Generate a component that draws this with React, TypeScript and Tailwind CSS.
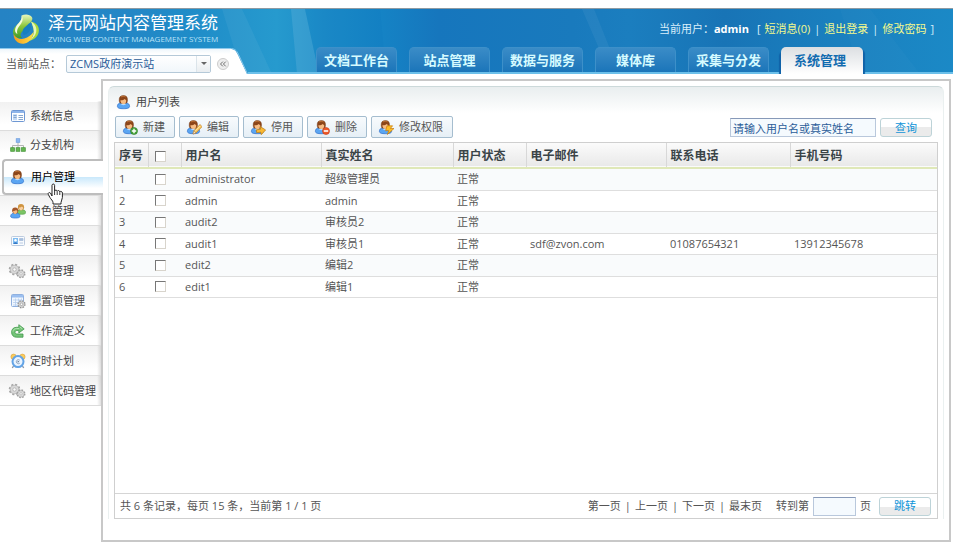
import React from "react";
import { ChevronsLeft } from "lucide-react";

type Badge = "add" | "edit" | "stop" | "delete" | "power";

function UserIcon({ badge }: { badge?: Badge }) {
  return (
    <svg viewBox="0 0 16 16" className="size-4 shrink-0" aria-hidden="true">
      <path d="M1.400 12.400C1.400 9.800 3.200 8.600 7.400 8.600s6.200 1.200 6.200 3.800c0 1.700-2.500 2.300-6.200 2.300s-6-.6-6-2.300z" fill="#5aa5f2" stroke="#2f6fca" strokeWidth=".7" />
      <path d="M4.500 9.600c1 2.300 4.800 2.300 5.900 0z" fill="#b5dbff" />
      <path d="M3.200 6C3 3 4.600 1.600 7.400 1.600S11.700 3 11.500 6c0 1.600-.5 2.700-1.100 3.200H4.300C3.600 8.700 3.200 7.600 3.200 6z" fill="#8c4519" stroke="#6d3411" strokeWidth=".4" />
      <path d="M5 2.900c1.400-.8 3.300-.8 4.600 0" fill="none" stroke="#c77b3d" strokeWidth=".9" />
      <path d="M4.400 6.300c2 .1 3.500-.5 4.400-1.400l1.500 1.500c0 2.300-1.300 3.700-2.900 3.700s-3-1.500-3-3.800z" fill="#f7bc83" />
      {badge === "add" && (
        <g>
          <circle cx="12" cy="12" r="3.500" fill="#45a338" stroke="#2b7a25" strokeWidth=".6" />
          <path d="M12 9.800v4.400M9.800 12h4.400" stroke="#fff" strokeWidth="1.400" />
        </g>
      )}
      {badge === "delete" && (
        <g>
          <circle cx="12" cy="12" r="3.500" fill="#ee5a2a" stroke="#c53a17" strokeWidth=".6" />
          <path d="M9.800 12h4.400" stroke="#fff" strokeWidth="1.600" />
        </g>
      )}
      {badge === "edit" && (
        <g>
          <path d="M7 15l.8-3.200L14 5.500l2 2.200L9.900 14z" fill="#fbc75b" stroke="#c07a1c" strokeWidth=".7" />
          <path d="M7 15l.8-3.200L9.900 14z" fill="#f6e6cc" stroke="#8f6a3a" strokeWidth=".4" />
          <path d="M9.500 11.800l4.900-5" stroke="#fff1c4" strokeWidth=".8" />
        </g>
      )}
      {badge === "stop" && (
        <path d="M6.500 10.200h4.200V7.400l5 4.200-5 4.100v-2.600H6.500z" transform="rotate(-8 11 12)" fill="#f9b934" stroke="#bd7a12" strokeWidth=".7" />
      )}
      {badge === "power" && (
        <path d="M9 6.800h5.600L12.400 9.500H16l-6.600 6 1.400-3.900H7.600z" fill="#fdbb25" stroke="#c77d0b" strokeWidth=".7" />
      )}
    </svg>
  );
}

function RolesIcon() {
  return (
    <svg viewBox="0 0 16 16" className="size-4 shrink-0" aria-hidden="true">
      <path d="M7 9.600c0-2 1.600-3 4.300-3s4.400 1 4.400 3c0 1.400-1.900 1.700-4.400 1.700S7 11 7 9.600z" fill="#7cc566" stroke="#4b9a41" strokeWidth=".6" />
      <circle cx="11" cy="4.200" r="3.100" fill="#cf9440" />
      <path d="M8.900 4.600c1 .1 2.300-.3 2.900-1l1.300 1c0 1.600-.9 2.800-2.100 2.800S8.900 6.200 8.900 4.600z" fill="#f8d0a2" />
      <path d="M.6 13.200c0-2.100 1.900-3.200 4.700-3.200s4.700 1.100 4.700 3.200c0 1.500-2 1.900-4.700 1.900S.6 14.700.6 13.200z" fill="#5aa5f2" stroke="#2f6fca" strokeWidth=".6" />
      <circle cx="5.200" cy="7.600" r="3.100" fill="#a5582a" />
      <path d="M3.100 8c1 .1 2.300-.3 2.900-1l1.300 1c0 1.600-.9 2.900-2.100 2.900S3.100 9.600 3.100 8z" fill="#f7bc83" />
    </svg>
  );
}

function InfoIcon() {
  return (
    <svg viewBox="0 0 16 16" className="size-4 shrink-0" aria-hidden="true">
      <rect x="1.500" y="2.500" width="13" height="11" rx="1" fill="#fff" stroke="#6e97d3" />
      <rect x="2" y="3" width="12" height="2" fill="#8fb5ea" />
      <rect x="3" y="6.200" width="4" height="6" fill="#c3d9f5" />
      <path d="M3.500 7.500h3M3.500 9.500h3M8.500 7.500h4.500M8.500 9.500h4.500M8.500 11.500h4.500" stroke="#86a6cf" />
    </svg>
  );
}

function OrgIcon() {
  return (
    <svg viewBox="0 0 16 16" className="size-4 shrink-0" aria-hidden="true">
      <path d="M8 5v3M2.500 11V8.500h11V11M8 8v3" fill="none" stroke="#b5b5b5" />
      <rect x="6.200" y="1.700" width="3.600" height="3.600" fill="#8db8f0" stroke="#6b9cdd" strokeWidth=".7" />
      <rect x=".7" y="10.700" width="3.800" height="3.600" fill="#65b650" stroke="#429338" strokeWidth=".7" />
      <rect x="6.100" y="10.700" width="3.800" height="3.600" fill="#65b650" stroke="#429338" strokeWidth=".7" />
      <rect x="11.500" y="10.700" width="3.800" height="3.600" fill="#65b650" stroke="#429338" strokeWidth=".7" />
    </svg>
  );
}

function MenuIcon() {
  return (
    <svg viewBox="0 0 16 16" className="size-4 shrink-0" aria-hidden="true">
      <rect x="1.500" y="3.500" width="13" height="9" rx="1" fill="#f8fbfe" stroke="#bccbdf" />
      <rect x="3" y="5" width="5" height="6" fill="#7fbdf2" />
      <circle cx="5.500" cy="7.200" r="1.200" fill="#fff" />
      <path d="M3.500 11c0-2.400 4-2.400 4 0z" fill="#3478c6" />
      <path d="M9.500 5.500h3.500v2h-3.500zM9.500 10h3.500" fill="#a8bfdc" stroke="#a8bfdc" strokeWidth=".8" />
    </svg>
  );
}

function GearsIcon() {
  return (
    <svg viewBox="0 0 18 16" className="h-4 w-[18px] shrink-0" aria-hidden="true">
      <circle cx="6.500" cy="6.500" r="4.800" fill="#d2d2d2" stroke="#a6a6a6" strokeWidth="2" strokeDasharray="2 1.770" />
      <circle cx="6.500" cy="6.500" r="4.200" fill="#d9d9d9" stroke="#b0b0b0" strokeWidth=".5" />
      <circle cx="6.500" cy="6.500" r="1.700" fill="#fafafa" stroke="#a6a6a6" strokeWidth=".7" />
      <circle cx="13" cy="10.800" r="3.600" fill="#d2d2d2" stroke="#a0a0a0" strokeWidth="1.800" strokeDasharray="1.600 1.230" />
      <circle cx="13" cy="10.800" r="3.100" fill="#dedede" stroke="#aaa" strokeWidth=".5" />
      <circle cx="13" cy="10.800" r="1.200" fill="#fff" stroke="#a0a0a0" strokeWidth=".6" />
    </svg>
  );
}

function ConfigIcon() {
  return (
    <svg viewBox="0 0 16 16" className="size-4 shrink-0" aria-hidden="true">
      <rect x="1.500" y="1.500" width="12" height="12" rx="1" fill="#f1f7fe" stroke="#8fb0df" />
      <rect x="2" y="2" width="11" height="2.500" fill="#9bbff0" />
      <path d="M3 7h9M3 9.500h9M3 12h9M5.500 5.500V13M8.500 5.500V13M11.500 5.500V13" stroke="#b5cdee" strokeWidth=".8" />
      <circle cx="11.500" cy="11.300" r="3.300" fill="#c9c9c9" stroke="#929292" strokeWidth="1.600" strokeDasharray="1.500 1.090" />
      <circle cx="11.500" cy="11.300" r="2.800" fill="#cfcfcf" />
      <circle cx="11.500" cy="11.300" r="1.200" fill="#fff" stroke="#929292" strokeWidth=".6" />
    </svg>
  );
}

function FlowIcon() {
  return (
    <svg viewBox="0 0 16 16" className="size-4 shrink-0" aria-hidden="true">
      <path
        d="M13 14.200H6.600C3.300 14.200 1.600 12 1.600 9.200c0-2.900 1.800-4.900 5-4.900h2.200V1.700l5.400 4.200L8.800 10V7.500H7c-1.300 0-2 .7-2 1.800 0 1.100.7 1.700 2 1.700h6z"
        fill="#74c478"
        stroke="#41984c"
        strokeWidth=".8"
        strokeLinejoin="round"
      />
      <path d="M9.800 3.900l2.500 2M3 8.600C3.200 6.700 4.500 5.500 6.700 5.500h2.500" fill="none" stroke="#b5e5b3" strokeWidth=".9" />
    </svg>
  );
}

function ClockIcon() {
  return (
    <svg viewBox="0 0 16 16" className="size-4 shrink-0" aria-hidden="true">
      <path d="M3.500 13l-1.200 2M12.500 13l1.200 2" stroke="#8b97a8" strokeWidth="1.400" />
      <circle cx="3.600" cy="3.800" r="2.700" fill="#fbcb5c" stroke="#d9a23c" strokeWidth=".6" />
      <circle cx="12.400" cy="3.800" r="2.700" fill="#fbcb5c" stroke="#d9a23c" strokeWidth=".6" />
      <circle cx="8" cy="8.600" r="5.500" fill="#eaf4ff" stroke="#62a3e6" strokeWidth="2" />
      <path d="M9.800 7.200C8.500 6 6.300 6.900 6.300 8.700s2.200 2.700 3.500 1.500" fill="none" stroke="#7d97b5" strokeWidth=".8" />
      <path d="M7.600 7.600l1.800 1.100-1.800 1z" fill="#54708f" />
    </svg>
  );
}

function Logo() {
  return (
    <svg viewBox="0 0 30 32" className="h-8 w-[30px] shrink-0" aria-hidden="true">
      <defs>
        <linearGradient id="logoGreen" x1="0" y1="0" x2="0" y2="1">
          <stop offset="0" stopColor="#e9f7c0" />
          <stop offset=".5" stopColor="#8cc63a" />
          <stop offset="1" stopColor="#3f9b2d" />
        </linearGradient>
        <linearGradient id="logoGold" x1="0" y1="0" x2="1" y2="0">
          <stop offset="0" stopColor="#f59c1a" />
          <stop offset="1" stopColor="#ffe04a" />
        </linearGradient>
      </defs>
      <path d="M10.500 2.500C14 .8 19 1 21 4.200c1 1.700-.2 3.600-1.700 5.200l-8.700 9.800c-1.500 1.800-1.500 4 .4 5.600C6 26 1.800 23 2 18.800c.2-3.400 2.400-5 4.800-7.700C9 8.600 11.300 6.300 10.500 2.500z" fill="url(#logoGreen)" />
      <path d="M10.500 2.500c2.200 3.200 1 6.400-1.200 9.200-2 2.600-4 5.300-2.900 9.300C3 19.500 3.500 15 6.800 11.100 9 8.600 11.300 6.300 10.500 2.500z" fill="#f4fbe0" />
      <path d="M20 8.500c6 1.500 8.800 5.800 7.700 10.800-1 4.700-5 7.700-9.700 8.700 3.700-3.200 5-6.200 4.800-9.800-.2-3.700-1.500-6.500-2.800-9.700z" fill="#a9d83c" />
      <path d="M20 8.500c4.500 2.700 6.300 6.800 5 11.300-.8 2.900-3.200 6-7 8.200 3.700-3.200 5-6.200 4.800-9.800-.2-3.700-1.500-6.500-2.800-9.700z" fill="#e8f6b8" />
      <path d="M2.500 21c2.300 4.300 6.500 5.600 10.800 4.600 4-1 6.700-3.300 9.300-6.800-.5 5.800-3.600 10.600-9.100 11.800C7.700 31.700 2.700 27.600 2.500 21z" fill="url(#logoGold)" />
      <path d="M13 15l5.500-5c1.800 2.500 1.600 6.300-.6 9-1.300 1.500-3 2.600-5.200 3-1.600-2-1.500-4.800.3-7z" fill="#167fc0" />
    </svg>
  );
}

function HandCursor() {
  return (
    <svg viewBox="0 0 17 22" className="pointer-events-none absolute top-[22px] left-[43px] z-20 h-[22px] w-[17px]" aria-hidden="true">
      <path
        d="M5 13V2.300C5 .6 7.600.6 7.600 2.300V8c.3-1.300 2.500-1.200 2.600.3.500-1.200 2.500-1 2.600.6.600-1 2.600-.6 2.600 1.200v4.400c0 2-1.400 3.200-1.400 5V21H6v-1.500c0-1.700-2.200-3.300-3.200-5.200L1.300 11.400c-.7-1.500 1.200-2.500 2.200-1.200z"
        fill="#fff"
        stroke="#222"
        strokeWidth="1"
        strokeLinejoin="round"
      />
      <path d="M7.600 8v4M10.200 8.500V12M12.800 9.200V12" stroke="#222" strokeWidth=".9" />
    </svg>
  );
}

const tabs = ["文档工作台", "站点管理", "数据与服务", "媒体库", "采集与分发", "系统管理"];

const menu = [
  { label: "系统信息", icon: <InfoIcon /> },
  { label: "分支机构", icon: <OrgIcon /> },
  { label: "用户管理", icon: <UserIcon />, active: true },
  { label: "角色管理", icon: <RolesIcon /> },
  { label: "菜单管理", icon: <MenuIcon /> },
  { label: "代码管理", icon: <GearsIcon /> },
  { label: "配置项管理", icon: <ConfigIcon /> },
  { label: "工作流定义", icon: <FlowIcon /> },
  { label: "定时计划", icon: <ClockIcon /> },
  { label: "地区代码管理", icon: <GearsIcon /> },
];

const actions: { label: string; badge: Badge }[] = [
  { label: "新建", badge: "add" },
  { label: "编辑", badge: "edit" },
  { label: "停用", badge: "stop" },
  { label: "删除", badge: "delete" },
  { label: "修改权限", badge: "power" },
];

const users = [
  { name: "administrator", real: "超级管理员", status: "正常", email: "", phone: "", mobile: "" },
  { name: "admin", real: "admin", status: "正常", email: "", phone: "", mobile: "" },
  { name: "audit2", real: "审核员2", status: "正常", email: "", phone: "", mobile: "" },
  { name: "audit1", real: "审核员1", status: "正常", email: "sdf@zvon.com", phone: "01087654321", mobile: "13912345678" },
  { name: "edit2", real: "编辑2", status: "正常", email: "", phone: "", mobile: "" },
  { name: "edit1", real: "编辑1", status: "正常", email: "", phone: "", mobile: "" },
];

const checkboxClass =
  "block size-[11px] appearance-none border border-t-[#777] border-l-[#777] border-r-[#d8d4cc] border-b-[#d8d4cc] bg-white checked:bg-[#4c97ea]";

const smallButtonClass =
  "h-[19px] w-[52px] rounded-[3px] border border-[#bdd3d8] bg-linear-to-b from-white from-50% to-[#ebebeb] to-50% text-[#0f94d8]";

function Header() {
  return (
    <header className="relative mr-[2px] flex h-[66px] overflow-hidden border-t border-[#8d9aa3] bg-[linear-gradient(90deg,#2583c4_0%,#2387c6_14%,#1f8cc8_20%,#269ace_29%,#1c8cc8_34%,#1583c5_40%,#1676bd_46%,#197abd_60%,#1b7ebf_66%,#1874b6_76%,#1a80bf_88%,#1b89c6_100%)]">
      {/* light streaks */}
      <svg viewBox="0 0 953 65" preserveAspectRatio="none" className="absolute inset-0 size-full" aria-hidden="true">
        <path d="M222 0h20l30 65h-30z" fill="#fff" opacity=".05" />
        <path d="M291 0h14l14 65h-22z" fill="#fff" opacity=".1" />
        <path d="M305 0h75l6 65h-67z" fill="#0a6db8" opacity=".1" />
        <path d="M582 0h12l26 65h-10z" fill="#fff" opacity=".05" />
        <path d="M840 0h30l50 65h-60z" fill="#fff" opacity=".02" />
      </svg>

      {/* Logo and site picker */}
      <div className="relative flex w-[248px] shrink-0 flex-col">
        <div className="flex h-[39px] items-center gap-[7px] pl-[11px]">
          <Logo />
          <div className="whitespace-nowrap text-white">
            <h1 className="text-[17px] leading-5">泽元网站内容管理系统</h1>
            <p className="text-[8px] leading-3 text-[#b9e2f8]">ZVING WEB CONTENT MANAGEMENT SYSTEM</p>
          </div>
        </div>
        <div className="flex flex-1">
          <div className="flex flex-1 items-center border-t border-[#8cc8ec] bg-linear-to-b from-[#eef6fb] to-white to-20% pt-1 pl-[6px] text-[#555]">
            <label htmlFor="site" className="w-[60px] shrink-0">当前站点：</label>
            <div className="relative">
              <select
                id="site"
                className="block h-[18px] w-[145px] appearance-none rounded-[2px] border border-[#b5c9d8] bg-linear-to-b from-white to-[#f1f7fb] pl-[3px] leading-4 text-[#2a5c99]"
              >
                <option>ZCMS政府演示站</option>
              </select>
              <span className="pointer-events-none absolute inset-y-px right-px flex w-[14px] items-center justify-center border-l border-[#dbe4ea] bg-linear-to-b from-white to-[#e9edf0]">
                <svg viewBox="0 0 6 3" className="h-[3px] w-[6px]" aria-hidden="true">
                  <path d="M0 0h6L3 3z" fill="#666" />
                </svg>
              </span>
            </div>
            <button type="button" aria-label="收起" className="ml-[6px] flex size-3 shrink-0 items-center justify-center rounded-full border border-[#ccc] bg-[#eee] text-[#555]">
              <ChevronsLeft size={10} />
            </button>
          </div>
          <svg viewBox="0 0 18 26" preserveAspectRatio="none" className="h-full w-[18px] shrink-0" aria-hidden="true">
            <path d="M0 1c4 0 6 1.500 8 6l9 19H0z" fill="#fff" />
            <path d="M0 .5c4.500 0 6.500 1.500 8.500 6L17.500 26" fill="none" stroke="#8cc8ec" />
          </svg>
        </div>
      </div>

      {/* Account links and tabs */}
      <div className="relative flex min-w-0 flex-1 flex-col border-b-2 border-[#6cc0ea]">
        <div className="flex h-[38px] items-center justify-end gap-1 pt-[2px] pr-[19px] whitespace-nowrap text-[#d9effb]">
          <span>
            当前用户：<b className="font-bold text-white">admin</b>
          </span>
          <span className="ml-1">[</span>
          <a href="#messages" className="text-[#f4f98d]">短消息(0)</a>
          <span>|</span>
          <a href="#logout" className="text-[#f4f98d]">退出登录</a>
          <span>|</span>
          <a href="#password" className="text-[#f4f98d]">修改密码</a>
          <span>]</span>
        </div>
        <nav className="flex flex-1 gap-3 pl-[68px] text-[13px] font-bold">
          {tabs.map((tab) =>
            tab === "系统管理" ? (
              <a key={tab} href="#system" className="-mb-[2px] flex w-[82px] shrink-0 items-center justify-center rounded-t-[5px] bg-linear-to-b from-[#dcdfe2] to-white pr-1 pb-[2px] text-[#136cb0] shadow-[2px_2px_1px_#1062a8,-2px_4px_1px_#1062a8]">
                {tab}
              </a>
            ) : (
              <a key={tab} href="#tab" className="flex w-[81px] shrink-0 items-center justify-center rounded-t-[5px] border border-b-0 border-[#3d90c9] bg-linear-to-b from-[#3a8cc7] to-[#1a75b9] text-[#d6fbff]">
                {tab}
              </a>
            ),
          )}
        </nav>
      </div>
    </header>
  );
}

function Sidebar() {
  return (
    <nav className="relative z-10 w-[101px] shrink-0 pt-[27px]">
      {menu.map((item) =>
        item.active ? (
          <a
            key={item.label}
            href="#users"
            className="relative -mr-[2px] ml-[2px] flex h-[36px] items-center gap-[5px] rounded-l-[4px] border-2 border-r-0 border-[#bdbdbd] bg-[linear-gradient(180deg,#fff_0,#fff_50%,#c9e8fb_50%,#fff_85%)] pl-[6px] text-black"
          >
            {item.icon}
            {item.label}
            <HandCursor />
          </a>
        ) : (
          <a
            key={item.label}
            href="#menu"
            className="flex h-[30px] items-center gap-1 border-t border-[#dcdcdc] bg-[linear-gradient(270deg,rgba(0,0,0,0.12)_0,transparent_4px),linear-gradient(180deg,#f1f1f1,#fff_80%)] whitespace-nowrap text-[#444] first:border-transparent nth-[-n+2]:h-[29px]"
          >
            <span className="flex w-[26px] shrink-0 justify-end">{item.icon}</span>
            {item.label}
          </a>
        ),
      )}
      <div className="border-t border-[#dcdcdc]" />
    </nav>
  );
}

function UserTable() {
  return (
    <table className="w-full table-fixed border-collapse text-left">
      <colgroup>
        <col className="w-[33px]" />
        <col className="w-[33px]" />
        <col className="w-[140px]" />
        <col className="w-[132px]" />
        <col className="w-[73px]" />
        <col className="w-[140px]" />
        <col className="w-[124px]" />
        <col />
      </colgroup>
      <thead>
        <tr className="h-[25px] border-b-2 border-[#dfe8b8] bg-linear-to-b from-[#fbfbfb] to-[#e9e9e9] text-xs whitespace-nowrap text-[#3a4448] [&>th]:border-l [&>th]:border-l-[#d8d8d8] [&>th]:px-1 [&>th]:pt-[2px] [&>th:first-child]:border-l-0">
          <th>序号</th>
          <th>
            <input type="checkbox" aria-label="全选" className={`${checkboxClass} ml-[2px]`} />
          </th>
          <th>用户名</th>
          <th>真实姓名</th>
          <th>用户状态</th>
          <th>电子邮件</th>
          <th>联系电话</th>
          <th>手机号码</th>
        </tr>
      </thead>
      <tbody className="text-[#555]">
        {users.map((user, index) => (
          <tr key={user.name} className="h-[21px] border-b border-[#dedede] odd:h-[22px] odd:bg-[#f9fbfc] [&>td]:px-1 [&>td]:leading-4">
            <td>{index + 1}</td>
            <td>
              <input type="checkbox" aria-label={user.name} className={`${checkboxClass} ml-[3px]`} />
            </td>
            <td>{user.name}</td>
            <td>{user.real}</td>
            <td>{user.status}</td>
            <td>{user.email}</td>
            <td>{user.phone}</td>
            <td>{user.mobile}</td>
          </tr>
        ))}
      </tbody>
    </table>
  );
}

function Pager() {
  return (
    <div className="flex h-[25px] items-center justify-between border-t border-[#d5d5d5] pr-[6px] pl-[5px] whitespace-nowrap text-[#555]">
      <span>共 6 条记录，每页 15 条，当前第 1 / 1 页</span>
      <div className="flex items-center gap-1">
        <a href="#first">第一页</a>
        <span>|</span>
        <a href="#prev">上一页</a>
        <span>|</span>
        <a href="#next">下一页</a>
        <span>|</span>
        <a href="#last">最末页</a>
        <label htmlFor="page" className="ml-[10px]">转到第</label>
        <input id="page" type="text" className="h-[19px] w-[43px] border border-[#b9c8dc] border-t-[#8799b8] bg-[#f5fafe] px-1" />
        <span>页</span>
        <button type="button" className={`${smallButtonClass} ml-1`}>跳转</button>
      </div>
    </div>
  );
}

function App() {
  return (
    <div className="flex min-h-screen flex-col bg-white pt-2 font-['Open_Sans','Noto_Sans_CJK_SC',sans-serif] text-[11px] leading-4">
      <Header />
      <div className="flex flex-1">
        <Sidebar />
        <main className="mt-[5px] mr-1 mb-[2px] flex min-w-0 flex-1 flex-col border-2 border-[#c8c8c8] px-[5px] pt-[5px] pb-[21px]">
          <section className="flex flex-1 flex-col rounded-t-[6px] border border-b-0 border-[#eaf0f0] border-t-[#ccd9da] bg-[linear-gradient(180deg,#e9eeef_0,#fff_26px)] px-[5px]">
            <h2 className="flex h-[29px] items-center gap-1 pt-px pl-[2px] text-[#444]">
              <UserIcon />
              用户列表
            </h2>
            <div className="flex h-[26px] items-start justify-between pr-[6px] pl-[1px]">
              <div className="flex gap-1">
                {actions.map((action) => (
                  <button
                    key={action.label}
                    type="button"
                    className="flex h-[22px] items-center gap-[5px] rounded-[2px] border border-[#a5bdcf] bg-linear-to-b from-[#f8fbfd] to-[#e6eff6] pr-[9px] pl-[6px] text-[#555]"
                  >
                    <UserIcon badge={action.badge} />
                    {action.label}
                  </button>
                ))}
              </div>
              <div className="flex gap-1 pt-[2px]">
                <input
                  type="text"
                  aria-label="搜索用户"
                  defaultValue="请输入用户名或真实姓名"
                  className="h-[19px] w-[146px] border border-[#b9c8dc] border-t-[#8799b8] bg-[#f5fafe] px-[2px] text-[#2a5c99]"
                />
                <button type="button" className={smallButtonClass}>查询</button>
              </div>
            </div>
            <div className="flex flex-1 flex-col border border-[#cfcfcf]">
              <UserTable />
              <div className="flex-1" />
              <Pager />
            </div>
          </section>
        </main>
      </div>
    </div>
  );
}

export default App;
